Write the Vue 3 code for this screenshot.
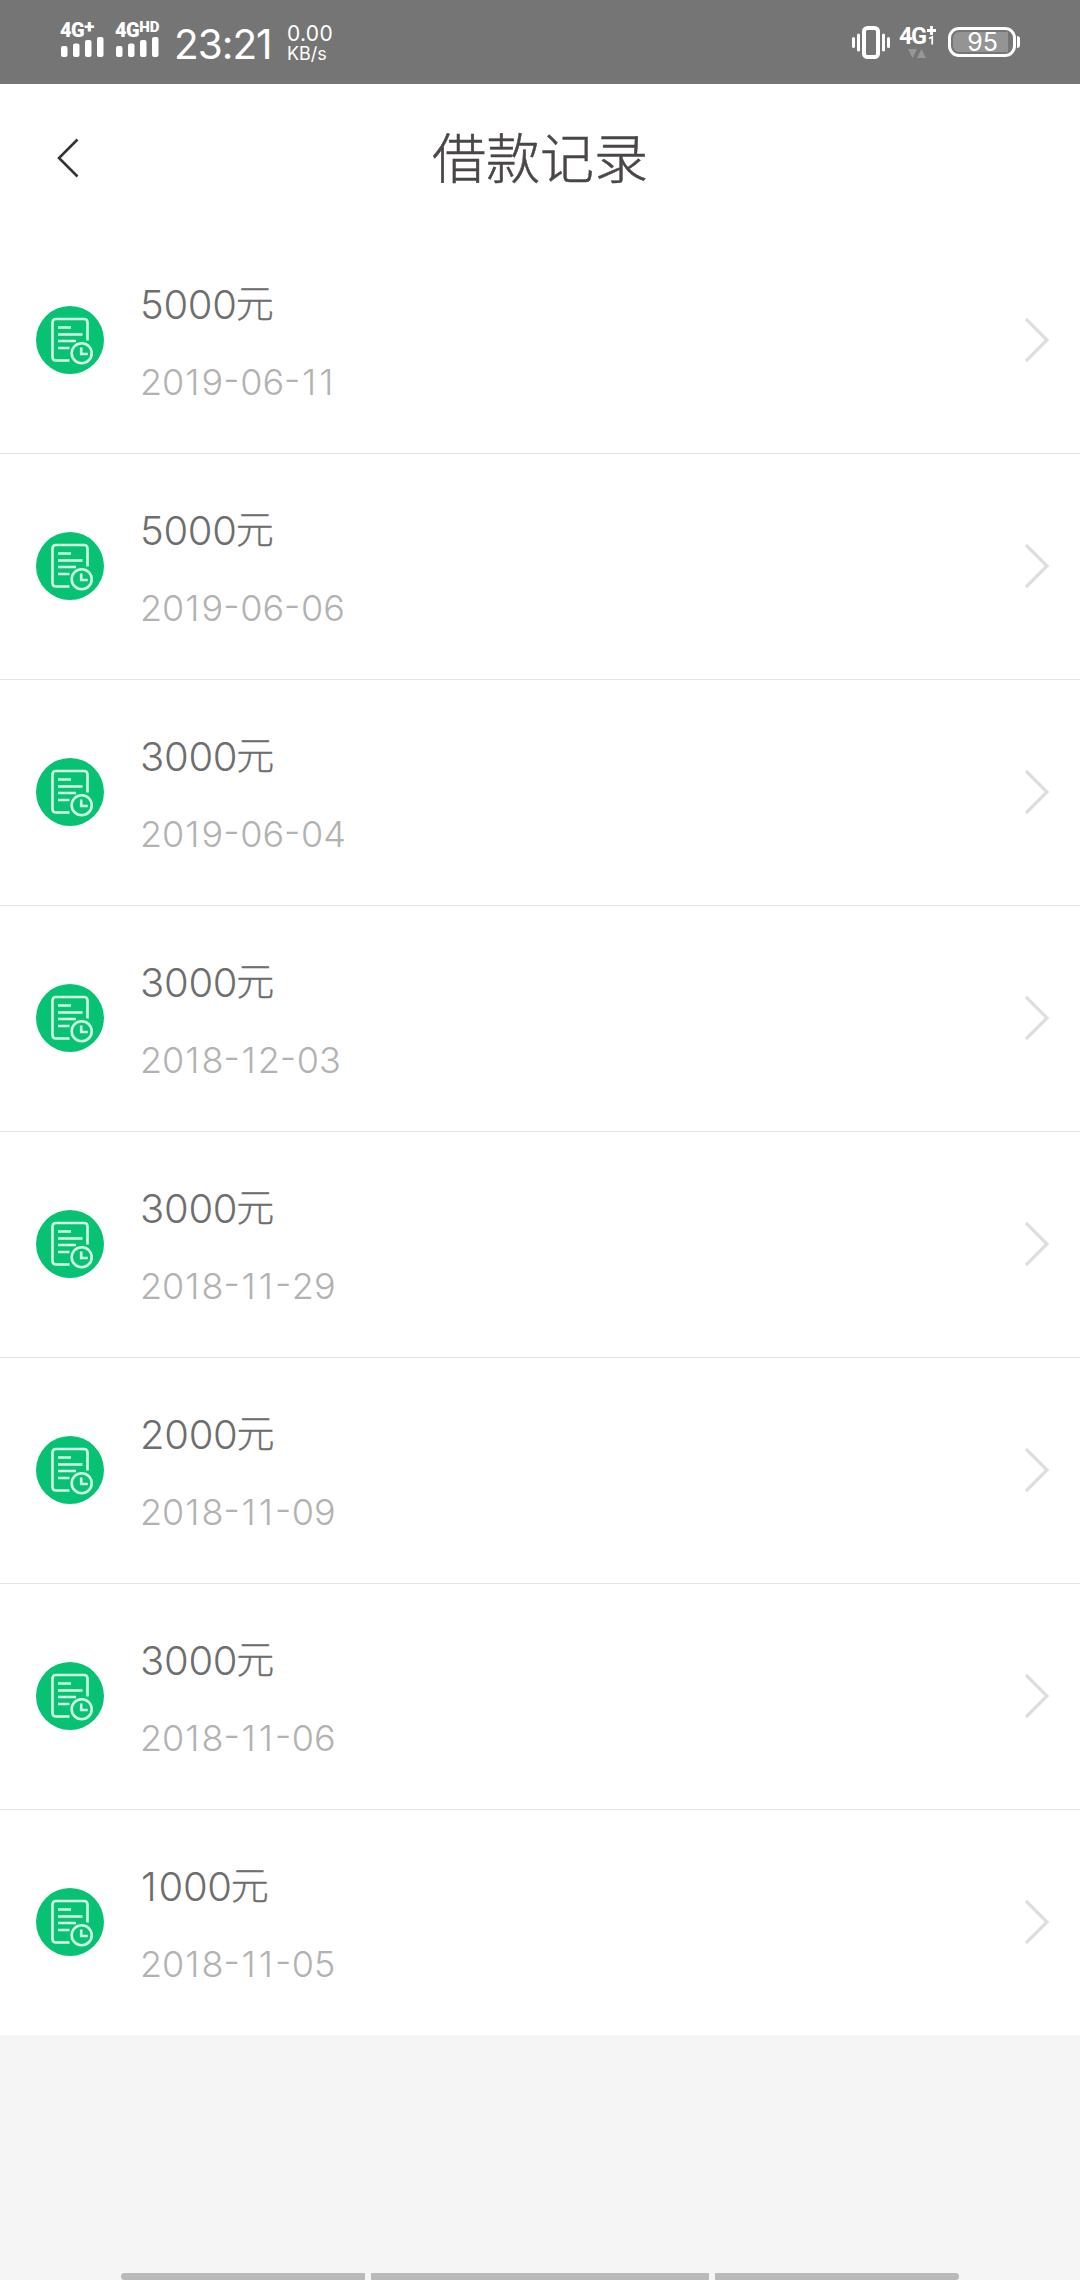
<script setup>
const records = [
  { amount: '5000', date: '2019-06-11' },
  { amount: '5000', date: '2019-06-06' },
  { amount: '3000', date: '2019-06-04' },
  { amount: '3000', date: '2018-12-03' },
  { amount: '3000', date: '2018-11-29' },
  { amount: '2000', date: '2018-11-09' },
  { amount: '3000', date: '2018-11-06' },
  { amount: '1000', date: '2018-11-05' },
]

// The digit 1 and the hyphen need their own spacing.
const glyphClass = (char) => ({ one: char === '1', dash: char === '-' })
</script>

<template>
  <div class="screen">
    <div class="status">
      <div class="signal first">
        <div class="net">4G<span class="plus">+</span></div>
        <svg width="43" height="20" viewBox="0 0 43 20" fill="#fff">
          <rect x="0" y="9" width="6.5" height="11" rx="2" />
          <rect x="12" y="6.5" width="6.5" height="13.5" rx="2" />
          <rect x="24" y="3" width="6.5" height="17" rx="2" />
          <rect x="36" y="0" width="6.5" height="20" rx="2" />
        </svg>
      </div>
      <div class="signal second">
        <div class="net">4G<span class="hd">HD</span></div>
        <svg width="43" height="20" viewBox="0 0 43 20" fill="#fff">
          <rect x="0" y="9" width="6.5" height="11" rx="2" />
          <rect x="12" y="6.5" width="6.5" height="13.5" rx="2" />
          <rect x="24" y="3" width="6.5" height="17" rx="2" />
          <rect x="36" y="0" width="6.5" height="20" rx="2" />
        </svg>
      </div>
      <div class="clock">23:21</div>
      <div class="speed"><span>0.00</span><span class="unit">KB/s</span></div>
      <svg class="vibrate" width="38" height="34" viewBox="0 0 38 34" fill="none" stroke="#fff" stroke-linecap="round">
        <rect x="12" y="2" width="14" height="29" rx="3.5" stroke-width="4" />
        <path d="M1.5 12.5v8M6.5 9v15M31.5 9v15M36.5 12.5v8" stroke-width="3" />
      </svg>
      <div class="data">
        <div class="data-net">4G
          <svg width="9" height="20" viewBox="0 0 9 20" fill="none" stroke="#fff">
            <path d="M0 4.500h9M4.500 0v9" stroke-width="2.8" />
            <path d="M2 12.500L5.200 11V18.500" stroke-width="1.8" />
          </svg>
        </div>
        <svg class="traffic" width="18" height="9" viewBox="0 0 18 9" fill="#979797">
          <path d="M0 0h9L4.5 9zM9 9h9L13.500 0z" />
        </svg>
      </div>
      <div class="battery">
        <div class="cell"><div class="level"><span>95</span></div></div>
        <i class="cap"></i>
      </div>
    </div>

    <header class="header">
      <svg class="back" width="24" height="42" viewBox="0 0 24 42" fill="none" stroke="#333" stroke-width="2.6">
        <path d="M21.500 2.500L3 21l18.500 18.500" />
      </svg>
      <h1>借款记录</h1>
    </header>

    <ul class="list">
      <li v-for="record in records" :key="record.date" class="row">
        <svg class="icon" width="68" height="68" viewBox="0 0 68 68" fill="none" stroke="#d3fbe5" stroke-width="2.6">
          <circle cx="34" cy="34" r="34" fill="#07c272" stroke="none" />
          <path d="M51.500 34.500V16.500q0-3.500-3.500-3.500h-28Q16.500 13 16.500 16.500v34.500q0 3.500 3.500 3.500H33.500" />
          <path d="M22 21.500h13M22 28.500h24.500M22 35h18M22 42h11.500" />
          <circle cx="45.700" cy="47.200" r="10" />
          <path d="M45.200 41.500v6.500h6.500" />
        </svg>
        <div class="info">
          <div class="amount"><span v-for="(char, i) in record.amount" :key="i" :class="glyphClass(char)">{{ char }}</span><span class="yuan">元</span></div>
          <div class="date"><span v-for="(char, i) in record.date" :key="i" :class="glyphClass(char)">{{ char }}</span></div>
        </div>
        <svg class="chevron" width="26" height="46" viewBox="0 0 26 46" fill="none" stroke="#dedede" stroke-width="3.2">
          <path d="M2 2l21 21L2 44" />
        </svg>
      </li>
    </ul>

    <div class="navbar"><i class="left"></i><i class="middle"></i><i class="right"></i></div>
  </div>
</template>

<style>
body {
  margin: 0;
  background: #f5f5f5;
}
</style>

<style scoped>
.screen {
  width: 1080px;
  height: 2280px;
  display: flex;
  flex-direction: column;
  overflow: hidden;
  background: #f5f5f5;
  font-family: Inter, "Noto Sans CJK SC", sans-serif;
}
.screen svg {
  display: block;
  flex: none;
}
.status {
  height: 84px;
  box-sizing: border-box;
  padding: 0 60px;
  display: flex;
  align-items: flex-start;
  background: #757575;
  color: #fff;
}
.signal {
  flex: none;
  width: 55px;
  padding-top: 20px;
}
.signal svg {
  margin-left: 1px;
}
.net {
  height: 17px;
  display: flex;
  line-height: 20px;
  font-family: Roboto, sans-serif;
  font-weight: 900;
  font-size: 20px;
  letter-spacing: -0.5px;
}
.plus {
  font-size: 19px;
  line-height: 13px;
}
.hd {
  font-size: 15px;
  line-height: 14px;
  letter-spacing: 0;
}
.clock {
  width: 113px;
  padding: 20px 0 0 4px;
  font-size: 40.5px;
  line-height: 50px;
  letter-spacing: -1px;
}
.speed {
  display: flex;
  flex-direction: column;
  padding-top: 23px;
  font-size: 21px;
  line-height: 21px;
  letter-spacing: 0.3px;
}
.unit {
  font-size: 18px;
  line-height: 19px;
  letter-spacing: 0;
}
.vibrate {
  margin: 26px 9px 0 auto;
}
.data {
  width: 49px;
  padding-top: 26px;
}
.data-net {
  height: 23px;
  display: flex;
  gap: 1.5px;
  font-family: Roboto, sans-serif;
  font-weight: 700;
  font-size: 23.5px;
  line-height: 20px;
  letter-spacing: -1.5px;
}
.traffic {
  margin-left: 9px;
}
.battery {
  display: flex;
  align-items: center;
  gap: 1px;
  margin-top: 27px;
}
.cell {
  width: 68px;
  height: 30px;
  box-sizing: border-box;
  border: 3px solid #fff;
  border-radius: 11px;
  padding: 2px 5px 2px 2px;
}
.level {
  height: 20px;
  display: flex;
  justify-content: center;
  align-items: center;
  padding-left: 4px;
  border-radius: 6px 0 0 6px;
  background: #949494;
  font-size: 25px;
  line-height: 20px;
}
.cap {
  width: 3px;
  height: 12px;
  background: #fff;
  border-radius: 0 3px 3px 0;
}
.header {
  height: 143px;
  display: flex;
  align-items: center;
  background: #fff;
}
.back {
  margin: 4px 0 0 56px;
}
.header h1 {
  margin: 1px 80px 0 0;
  flex: 1;
  text-align: center;
  font-family: "Noto Sans CJK SC", sans-serif;
  font-weight: 300;
  font-size: 54px;
  line-height: 80px;
  color: #4a4647;
  -webkit-text-stroke: 0.5px #4a4647;
}
.list {
  margin: 0;
  padding: 0;
  list-style: none;
  background: #fff;
}
.row {
  height: 226px;
  box-sizing: border-box;
  padding: 0 30px 0 36px;
  display: flex;
  align-items: center;
}
.row + .row {
  padding-bottom: 1px;
  border-top: 1px solid #e3e3e3;
}
.info {
  flex: 1;
  margin-left: 36px;
  padding-top: 7px;
}
.amount {
  height: 78px;
  line-height: 78px;
  font-size: 40px;
  font-weight: 300;
  letter-spacing: -0.3px;
  color: #6e6e6e;
}
.yuan {
  display: inline-block;
  margin-left: -1px;
  line-height: 1;
  font-family: "Noto Sans CJK SC", sans-serif;
  font-size: 38px;
  vertical-align: 2px;
  -webkit-text-stroke: 0.3px #6e6e6e;
}
.date {
  height: 78px;
  margin-top: -1px;
  line-height: 78px;
  font-size: 36px;
  font-weight: 300;
  color: #b2b2b2;
}
.one {
  margin: 0 2px 0 1px;
}
.dash {
  display: inline-block;
  margin-right: 0.7px;
  line-height: 1;
  vertical-align: 3px;
}
.navbar {
  margin-top: auto;
  padding-left: 121px;
  height: 7px;
  display: flex;
  gap: 6px;
}
.navbar i {
  background: #bababa;
}
.left {
  width: 244px;
  border-radius: 4px 0 0 4px;
}
.middle {
  width: 338px;
}
.right {
  width: 244px;
  border-radius: 0 4px 4px 0;
}
</style>
